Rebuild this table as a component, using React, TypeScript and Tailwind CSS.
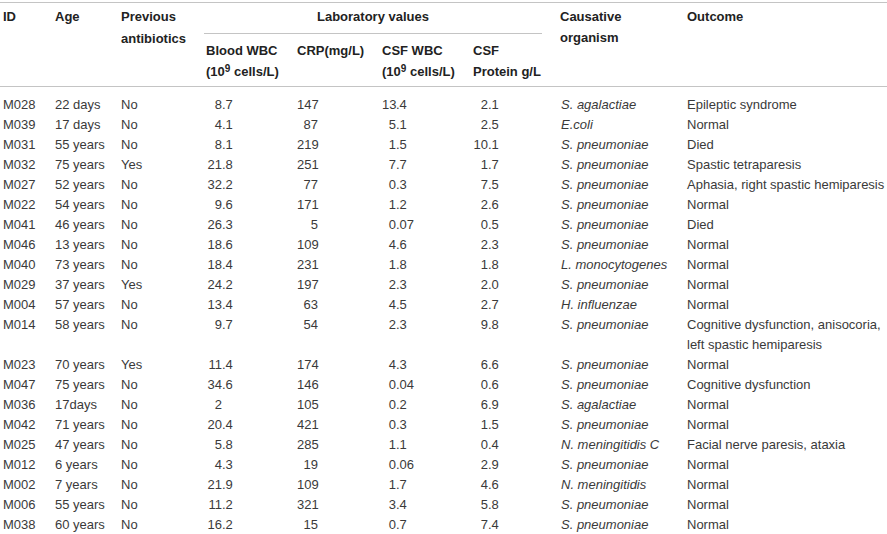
import React from "react";

type Row = [string, string, string, string, string, string, string, string, React.ReactNode];

const rows: Row[] = [
  ["M028", "22 days", "No", "8.7", "147", "13.4", "2.1", "S. agalactiae", "Epileptic syndrome"],
  ["M039", "17 days", "No", "4.1", "87", "5.1", "2.5", "E.coli", "Normal"],
  ["M031", "55 years", "No", "8.1", "219", "1.5", "10.1", "S. pneumoniae", "Died"],
  ["M032", "75 years", "Yes", "21.8", "251", "7.7", "1.7", "S. pneumoniae", "Spastic tetraparesis"],
  ["M027", "52 years", "No", "32.2", "77", "0.3", "7.5", "S. pneumoniae", "Aphasia, right spastic hemiparesis"],
  ["M022", "54 years", "No", "9.6", "171", "1.2", "2.6", "S. pneumoniae", "Normal"],
  ["M041", "46 years", "No", "26.3", "5", "0.07", "0.5", "S. pneumoniae", "Died"],
  ["M046", "13 years", "No", "18.6", "109", "4.6", "2.3", "S. pneumoniae", "Normal"],
  ["M040", "73 years", "No", "18.4", "231", "1.8", "1.8", "L. monocytogenes", "Normal"],
  ["M029", "37 years", "Yes", "24.2", "197", "2.3", "2.0", "S. pneumoniae", "Normal"],
  ["M004", "57 years", "No", "13.4", "63", "4.5", "2.7", "H. influenzae", "Normal"],
  [
    "M014",
    "58 years",
    "No",
    "9.7",
    "54",
    "2.3",
    "9.8",
    "S. pneumoniae",
    <>
      Cognitive dysfunction, anisocoria,
      <br />
      left spastic hemiparesis
    </>,
  ],
  ["M023", "70 years", "Yes", "11.4", "174", "4.3", "6.6", "S. pneumoniae", "Normal"],
  ["M047", "75 years", "No", "34.6", "146", "0.04", "0.6", "S. pneumoniae", "Cognitive dysfunction"],
  ["M036", "17days", "No", "2", "105", "0.2", "6.9", "S. agalactiae", "Normal"],
  ["M042", "71 years", "No", "20.4", "421", "0.3", "1.5", "S. pneumoniae", "Normal"],
  ["M025", "47 years", "No", "5.8", "285", "1.1", "0.4", "N. meningitidis C", "Facial nerve paresis, ataxia"],
  ["M012", "6 years", "No", "4.3", "19", "0.06", "2.9", "S. pneumoniae", "Normal"],
  ["M002", "7 years", "No", "21.9", "109", "1.7", "4.6", "N. meningitidis", "Normal"],
  ["M006", "55 years", "No", "11.2", "321", "3.4", "5.8", "S. pneumoniae", "Normal"],
  ["M038", "60 years", "No", "16.2", "15", "0.7", "7.4", "S. pneumoniae", "Normal"],
];

const cols = "grid grid-cols-[52px_66px_85px_91px_85px_91px_88px_126px_1fr]";

function Dec({ v, w }: { v: string; w: string }) {
  const i = v.indexOf(".");
  const intPart = i >= 0 ? v.slice(0, i) : v;
  const frac = i >= 0 ? v.slice(i) : "";
  return (
    <span className="inline-flex">
      <span className={`${w} text-right`}>{intPart}</span>
      <span>{frac}</span>
    </span>
  );
}

function Sup() {
  return <sup className="text-[10px] align-baseline relative top-[-4px] leading-none">9</sup>;
}

export default function App() {
  return (
    <div
      className="w-[887px] h-[534px] overflow-hidden bg-white text-[13px] text-[#3a3a3a]"
      style={{ fontFamily: '"Liberation Sans", Arial, sans-serif' }}
    >
      <div className="h-[2px]" />
      <div className="h-px bg-[#c4c4c4]" />
      {/* header */}
      <div className={`${cols} pl-[3px] h-[83px] font-bold text-[#222] leading-[22px]`}>
        <div className="pt-[3px]">ID</div>
        <div className="pt-[3px]">Age</div>
        <div className="pt-[3px]">
          Previous
          <br />
          antibiotics
        </div>
        <div className="col-span-4 flex flex-col">
          <div className="pt-[3px] h-[31px] border-b border-[#c4c4c4] mr-[19px] -ml-[2px] text-center">
            Laboratory values
          </div>
          <div className="grid grid-cols-[91px_85px_91px_88px] pt-[6px] leading-[21px]">
            <div>
              Blood WBC
              <br />
              (10<Sup /> cells/L)
            </div>
            <div>CRP(mg/L)</div>
            <div>
              CSF WBC
              <br />
              (10<Sup /> cells/L)
            </div>
            <div>
              CSF
              <br />
              Protein g/L
            </div>
          </div>
        </div>
        <div className="pt-[3px] -ml-[1px] leading-[21px]">
          Causative
          <br />
          organism
        </div>
        <div className="pt-[3px]">Outcome</div>
      </div>
      <div className="h-px bg-[#c4c4c4]" />
      {/* rows */}
      <div className="pt-[8px] leading-[20px]">
        {rows.map((r) => (
          <div key={r[0]} className={`${cols} pl-[3px]`}>
            <div>{r[0]}</div>
            <div>{r[1]}</div>
            <div>{r[2]}</div>
            <div>
              <Dec v={r[3]} w="w-[16px]" />
            </div>
            <div>
              <span className="inline-block w-[21px] text-right">{r[4]}</span>
            </div>
            <div>
              <Dec v={r[5]} w="w-[14px]" />
            </div>
            <div>
              <Dec v={r[6]} w="w-[15px]" />
            </div>
            <div className="italic">{r[7]}</div>
            <div>{r[8]}</div>
          </div>
        ))}
      </div>
    </div>
  );
}
